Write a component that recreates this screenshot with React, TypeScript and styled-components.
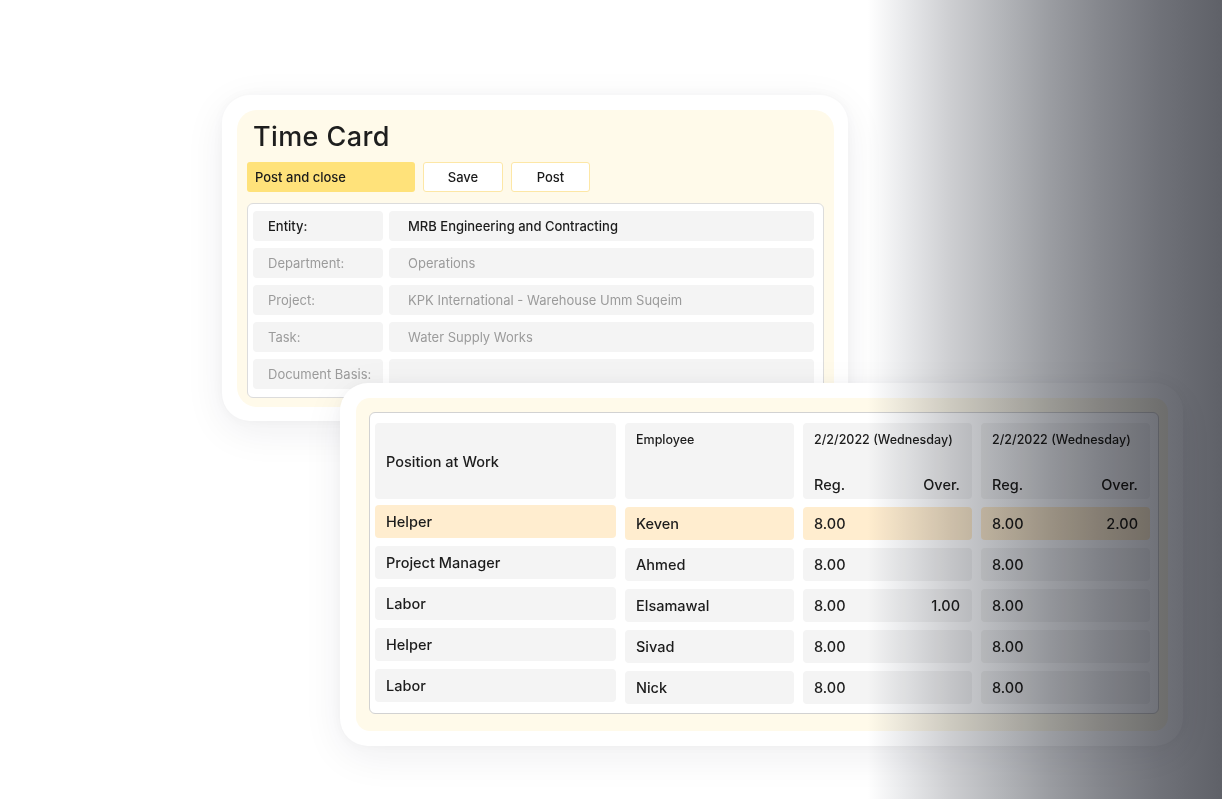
import React from "react";
import styled, { createGlobalStyle, css } from "styled-components";

const GlobalStyle = createGlobalStyle`
  html, body {
    margin: 0;
    padding: 0;
    background: #ffffff;
  }
  body {
    font-family: Inter, "Noto Sans", sans-serif;
    color: #1c1c1c;
  }
`;

const Stage = styled.div`
  position: relative;
  width: 1222px;
  height: 799px;
  overflow: hidden;
  padding: 95px 0 0 222px;
  box-sizing: border-box;
`;

// white rounded frame around each yellow panel
const Frame = styled.div<{ $w: number }>`
  position: relative;
  width: ${(p) => p.$w}px;
  box-sizing: border-box;
  padding: 15px 14px 14px 15px;
  background: #ffffff;
  border-radius: 28px;
  box-shadow: 0 10px 40px rgba(30, 30, 60, 0.07), 0 0 12px rgba(30, 30, 60, 0.03);
`;

const LowerFrame = styled(Frame)`
  margin: -38px 0 0 118px;
  padding: 15px 15px 15px 16px;
  z-index: 2;
`;

const Panel = styled.div`
  background: #fffaea;
  border-radius: 20px;
  padding: 10px 10px 9px 10px;
`;

const LowerPanel = styled(Panel)`
  padding: 14px 9px 17px 13px;
  border-radius: 14px;
`;

const Title = styled.h1`
  margin: 0 0 8px 6px;
  font-size: 27px;
  line-height: 34px;
  font-weight: 500;
  letter-spacing: 0.4px;
  color: #1e1e1e;
`;

const Toolbar = styled.div`
  display: flex;
  gap: 8px;
  margin-bottom: 11px;
`;

const Button = styled.button<{ $primary?: boolean; $w: number }>`
  width: ${(p) => p.$w}px;
  height: 30px;
  box-sizing: border-box;
  border-radius: 3px;
  font-family: inherit;
  font-size: 13px;
  font-weight: 500;
  color: #1a1a1a;
  cursor: pointer;
  ${(p) =>
    p.$primary
      ? css`
          background: #ffe27a;
          border: none;
          text-align: left;
          padding: 0 8px;
        `
      : css`
          background: #ffffff;
          border: 1.5px solid #fde7a6;
          text-align: center;
        `}
`;

const FormBox = styled.div`
  background: #ffffff;
  border: 1.5px solid #dcdcdc;
  border-radius: 6px;
  padding: 7px 9px 8px 5px;
  display: flex;
  flex-direction: column;
  gap: 7px;
`;

const FormRow = styled.div`
  display: grid;
  grid-template-columns: 130px 1fr;
  gap: 6px;
  height: 30px;
`;

const FormCell = styled.div<{ $strong?: boolean; $pad: number }>`
  background: #f4f4f4;
  border-radius: 4px;
  display: flex;
  align-items: center;
  padding-left: ${(p) => p.$pad}px;
  font-size: 13px;
  font-weight: ${(p) => (p.$strong ? 500 : 400)};
  color: ${(p) => (p.$strong ? "#1c1c1c" : "#9b9b9b")};
  white-space: nowrap;
  overflow: hidden;
`;

const TableBox = styled.div`
  background: #ffffff;
  border: 1.5px solid #d2d2d2;
  border-radius: 6px;
  padding: 10px 8px 9px 5px;
  display: grid;
  grid-template-columns: 241px 169px 169px 169px;
  grid-template-rows: 76px repeat(5, 33px);
  column-gap: 9px;
  row-gap: 8px;
`;

const HeadCell = styled.div<{ $center?: boolean }>`
  background: #f4f4f4;
  border-radius: 4px;
  box-sizing: border-box;
  padding: ${(p) => (p.$center ? "0 11px" : "9px 11px 0 11px")};
  display: flex;
  flex-direction: column;
  justify-content: ${(p) => (p.$center ? "center" : "flex-start")};
  font-size: ${(p) => (p.$center ? "14.5px" : "12.5px")};
  font-weight: 500;
  color: #1c1c1c;
`;

const DateHead = styled(HeadCell)`
  justify-content: space-between;
  padding: 9px 12px 6px 11px;
`;

const SubHead = styled.div`
  display: flex;
  justify-content: space-between;
  font-size: 14.5px;
  font-weight: 500;
`;

const Cell = styled.div<{ $hi?: boolean }>`
  background: ${(p) => (p.$hi ? "#ffedcf" : "#f4f4f4")};
  border-radius: 4px;
  display: flex;
  align-items: center;
  justify-content: space-between;
  padding: 0 12px 0 11px;
  font-size: 14.5px;
  font-weight: 500;
  color: #1c1c1c;
  white-space: nowrap;
`;

const PositionCell = styled(Cell)`
  margin: -2px 0 2px 0;
`;

const Shade = styled.div`
  position: absolute;
  inset: 0;
  pointer-events: none;
  z-index: 5;
  mix-blend-mode: multiply;
  background: linear-gradient(
    90deg,
    #ffffff 0%,
    #ffffff 71%,
    #eaebed 73.8%,
    #cdced1 77.8%,
    #b3b5b9 82%,
    #9a9ca1 86%,
    #85878d 90%,
    #6f7178 95%,
    #5f6168 100%
  );
`;

type Row = {
  position: string;
  employee: string;
  d1: [string, string];
  d2: [string, string];
  hi?: boolean;
};

const rows: Row[] = [
  { position: "Helper", employee: "Keven", d1: ["8.00", ""], d2: ["8.00", "2.00"], hi: true },
  { position: "Project Manager", employee: "Ahmed", d1: ["8.00", ""], d2: ["8.00", ""] },
  { position: "Labor", employee: "Elsamawal", d1: ["8.00", "1.00"], d2: ["8.00", ""] },
  { position: "Helper", employee: "Sivad", d1: ["8.00", ""], d2: ["8.00", ""] },
  { position: "Labor", employee: "Nick", d1: ["8.00", ""], d2: ["8.00", ""] },
];

const fields: [string, string][] = [
  ["Entity:", "MRB Engineering and Contracting"],
  ["Department:", "Operations"],
  ["Project:", "KPK International - Warehouse Umm Suqeim"],
  ["Task:", "Water Supply Works"],
  ["Document Basis:", ""],
];

const DateHeader = () => (
  <DateHead>
    <span>2/2/2022 (Wednesday)</span>
    <SubHead>
      <span>Reg.</span>
      <span>Over.</span>
    </SubHead>
  </DateHead>
);

const App = () => {
  return (
    <>
      <GlobalStyle />
      <Stage>
        <Frame $w={626}>
          <Panel>
            <Title>Time Card</Title>
            <Toolbar>
              <Button $primary $w={168}>Post and close</Button>
              <Button $w={80}>Save</Button>
              <Button $w={79}>Post</Button>
            </Toolbar>
            <FormBox>
              {fields.map(([label, value], i) => (
                <FormRow key={label}>
                  <FormCell $pad={15} $strong={i === 0}>{label}</FormCell>
                  <FormCell $pad={19} $strong={i === 0}>{value}</FormCell>
                </FormRow>
              ))}
            </FormBox>
          </Panel>
        </Frame>

        <LowerFrame $w={843}>
          <LowerPanel>
            <TableBox>
              <HeadCell $center>Position at Work</HeadCell>
              <HeadCell>Employee</HeadCell>
              <DateHeader />
              <DateHeader />
              {rows.map((r, i) => (
                <React.Fragment key={i}>
                  <PositionCell $hi={r.hi}>{r.position}</PositionCell>
                  <Cell $hi={r.hi}>{r.employee}</Cell>
                  <Cell $hi={r.hi}>
                    <span>{r.d1[0]}</span>
                    <span>{r.d1[1]}</span>
                  </Cell>
                  <Cell $hi={r.hi}>
                    <span>{r.d2[0]}</span>
                    <span>{r.d2[1]}</span>
                  </Cell>
                </React.Fragment>
              ))}
            </TableBox>
          </LowerPanel>
        </LowerFrame>
        <Shade />
      </Stage>
    </>
  );
};

export default App;
